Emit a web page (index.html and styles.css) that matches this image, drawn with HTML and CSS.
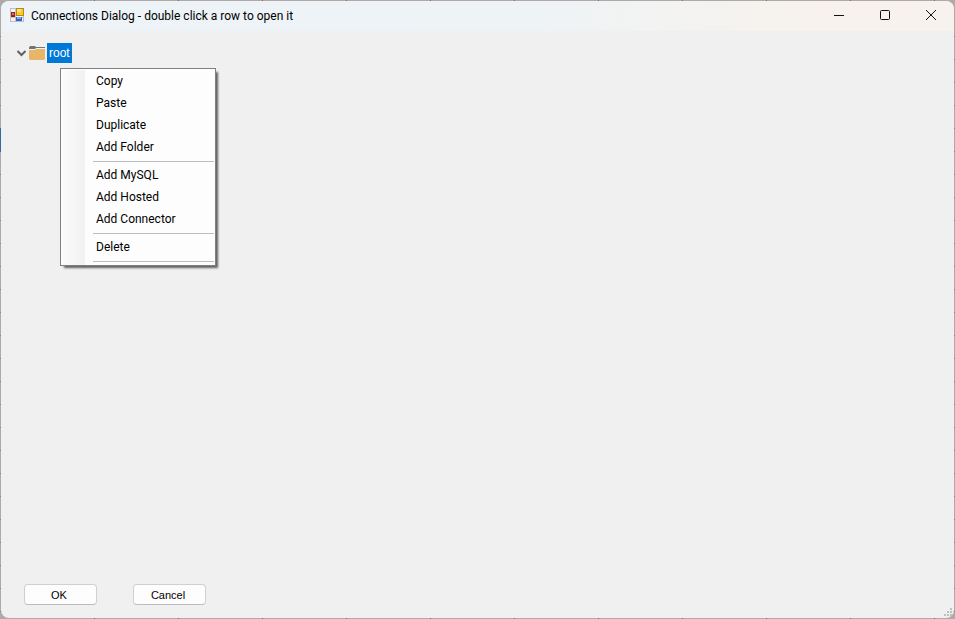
FILE: index.html
```
<!DOCTYPE html>
<html lang="en">
  <head>
    <meta charset="UTF-8" />
    <meta name="viewport" content="width=device-width, initial-scale=1.0" />
    <title>Connections Dialog</title>
    <link rel="stylesheet" href="styles.css">
  </head>
  <body>
    <div class="window">
      <header class="titlebar">
        <svg class="app-icon" width="14" height="14" viewBox="0 0 14 14">
          <rect x="0.5" y="0.5" width="13" height="13" fill="#f4f4f4" stroke="#bdbdbd" />
          <path d="M5.5 0V14M0 9.5H14M0 4.5H6" stroke="#c4c4c4" fill="none" />
          <rect x="1" y="4" width="4" height="5" fill="#a81c14" />
          <rect x="2" y="5" width="2" height="2" fill="#e0705c" />
          <rect x="6" y="0" width="8" height="8" fill="#b88a10" />
          <rect x="7" y="1" width="6" height="6" fill="#fcc82c" />
          <rect x="7" y="1" width="4" height="3" fill="#ffe48a" />
          <rect x="6" y="9" width="6" height="4" fill="#2f67c8" />
          <rect x="7" y="9" width="4" height="2" fill="#79aaf0" />
        </svg>
        <h1 class="title">Connections Dialog - double click a row to open it</h1>
        <div class="window-controls">
          <button type="button" aria-label="Minimize">
            <svg width="10" height="10" viewBox="0 0 10 10"><path d="M0 5.5H10" /></svg>
          </button>
          <button type="button" aria-label="Maximize">
            <svg width="10" height="10" viewBox="0 0 10 10"><rect x="0.5" y="0.5" width="9" height="9" rx="1" /></svg>
          </button>
          <button type="button" aria-label="Close">
            <svg width="10" height="10" viewBox="0 0 10 10"><path d="M0 0L10 10M10 0L0 10" /></svg>
          </button>
        </div>
      </header>

      <main class="tree">
        <div class="tree-row">
          <button type="button" class="toggle" aria-label="Collapse root">
            <svg width="11" height="8" viewBox="0 0 11 8"><path d="M1.5 2L5.5 6L9.5 2" /></svg>
          </button>
          <svg class="folder" width="16" height="14" viewBox="0 0 16 14">
            <path d="M0 3V1.5L1 0H6L7 1H16V3Z" fill="#757575" />
            <path d="M0 3H6L7 2H16V4H0Z" fill="#f2f2f2" />
            <path d="M0 4H6L7 3H16V13L15 14H1L0 13Z" fill="#e9b566" />
          </svg>
          <span class="node-label">root</span>

          <!-- Context menu -->
          <menu class="context-menu">
            <li><button type="button">Copy</button></li>
            <li><button type="button">Paste</button></li>
            <li><button type="button">Duplicate</button></li>
            <li><button type="button">Add Folder</button></li>
            <li class="separator"></li>
            <li><button type="button">Add MySQL</button></li>
            <li><button type="button">Add Hosted</button></li>
            <li><button type="button">Add Connector</button></li>
            <li class="separator"></li>
            <li><button type="button">Delete</button></li>
            <li class="separator"></li>
          </menu>
        </div>
      </main>

      <footer class="actions">
        <button type="button">OK</button>
        <button type="button">Cancel</button>
        <svg class="grip" width="8" height="8" viewBox="0 0 8 8">
          <path d="M6 0h2v2h-2zM3 3h2v2h-2zM6 3h2v2h-2zM0 6h2v2h-2zM3 6h2v2h-2zM6 6h2v2h-2z" />
        </svg>
      </footer>
    </div>
  </body>
</html>
```

FILE: styles.css
```
/* Reset */
* {
  margin: 0;
  padding: 0;
  box-sizing: border-box;
}

/* Desktop edge behind the window, with the rows and columns of a grid */
body {
  font-family: Roboto, "Open Sans", sans-serif;
  font-size: 12px;
  color: #000;
  min-height: 100vh;
  display: flex;
  padding: 1px;
  background:
    linear-gradient(#2c6da8, #2c6da8) 0 128px / 1px 24px no-repeat,
    repeating-linear-gradient(90deg, transparent 0 83px, #77706f 83px 84px) 11px 0,
    repeating-linear-gradient(transparent 0 22px, #8a8483 22px 23px) 0 14px,
    #b0a9a8;
}

button {
  font: inherit;
  color: inherit;
  border: none;
  background: none;
}

/* Window */
.window {
  flex: 1;
  display: flex;
  flex-direction: column;
  background: #f0f0f0;
  border-radius: 8px;
}

/* Title bar */
.titlebar {
  display: flex;
  align-items: center;
  height: 30px;
  padding: 0 0 2px 9px;
  border-radius: 8px 8px 0 0;
  background: linear-gradient(90deg, #edf3f7 0%, #eef3f6 55%, #f7f2ed 85%);
}

.title {
  flex: 1;
  margin-left: 7px;
  padding-top: 2px;
  font-size: 12px;
  font-weight: 400;
  white-space: nowrap;
}

.window-controls {
  display: flex;
  align-self: stretch;
}

.window-controls button {
  width: 46px;
  display: flex;
  align-items: center;
  justify-content: center;
}

.window-controls svg {
  fill: none;
  stroke: #111;
}

/* Tree */
.tree {
  flex: 1;
  padding: 12px 15px;
}

.tree-row {
  position: relative;
  display: flex;
  align-items: center;
  height: 20px;
}

.toggle {
  display: flex;
  width: 13px;
}

.toggle svg {
  fill: none;
  stroke: #606060;
  stroke-width: 2;
}

.node-label {
  margin-left: 2px;
  padding: 0 2px;
  font-family: "Liberation Sans", sans-serif;
  line-height: 20px;
  color: #fff;
  background: #0078d7;
}

/* Context menu */
.context-menu {
  position: absolute;
  top: 25px;
  left: 44px;
  width: 156px;
  padding: 1px;
  list-style: none;
  border: 1px solid #808080;
  background: linear-gradient(90deg, #fcfcfc, #f1f1f1) 1px 1px / 23px no-repeat, #fdfdfd;
  box-shadow: 3px 3px 2px -1px rgba(0, 0, 0, 0.6);
}

.context-menu button {
  display: block;
  width: 100%;
  padding-left: 34px;
  line-height: 22px;
  text-align: left;
}

.context-menu button:hover {
  background: #b3d7f3;
}

.separator {
  height: 6px;
  padding: 3px 0 0 31px;
}

.separator::after {
  content: "";
  display: block;
  height: 1px;
  background: #bdbdbd;
}

/* Buttons */
.actions {
  position: relative;
  display: flex;
  gap: 36px;
  padding: 0 23px 13px;
}

.actions button {
  width: 73px;
  height: 21px;
  padding-right: 3px;
  font-family: "Liberation Sans", sans-serif;
  font-size: 11px;
  border: 1px solid #d0d0d0;
  border-bottom-color: #bcbcbc;
  border-radius: 4px;
  background: #fdfdfd;
}

.grip {
  position: absolute;
  right: 2px;
  bottom: 2px;
  fill: #bfbfbf;
}
```
